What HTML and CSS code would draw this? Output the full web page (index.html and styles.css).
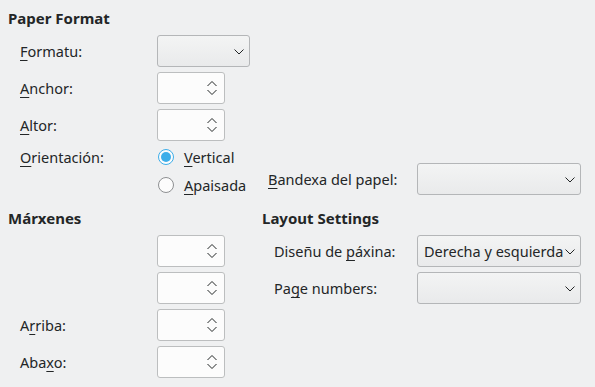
FILE: index.html
```html
<!DOCTYPE html>
<html>
<head>
<meta charset="utf-8">
<link rel="stylesheet" href="styles.css">
</head>
<body>
<div class="page">
  <section class="paper">
    <h2 class="heading">Paper Format</h2>
    <div class="paper-grid">
      <label class="label"><u>F</u>ormatu:</label>
      <div class="combo combo-small"><span class="combo-text"></span><svg class="chev" viewBox="0 0 10 6" width="10" height="6"><path d="M0.5 0.5 L5 5 L9.5 0.5" fill="none" stroke="#232627" stroke-width="1"/></svg></div>
      <div></div>

      <label class="label"><u>A</u>nchor:</label>
      <div class="spin"><svg class="spin-arrows" viewBox="0 0 10 14" width="10" height="14"><path d="M0.5 5 L5 0.5 L9.5 5 M0.5 9 L5 13.5 L9.5 9" fill="none" stroke="#232627" stroke-width="1"/></svg></div>
      <div></div>

      <label class="label"><u>A</u>ltor:</label>
      <div class="spin"><svg class="spin-arrows" viewBox="0 0 10 14" width="10" height="14"><path d="M0.5 5 L5 0.5 L9.5 5 M0.5 9 L5 13.5 L9.5 9" fill="none" stroke="#232627" stroke-width="1"/></svg></div>
      <div></div>

      <label class="label label-top"><u>O</u>rientación:</label>
      <div class="radios">
        <div class="radio-row"><span class="radio checked"></span><span><u>V</u>ertical</span></div>
        <div class="radio-row"><span class="radio"></span><span><u>A</u>paisada</span></div>
      </div>
      <div class="tray">
        <label class="label tray-label"><u>B</u>andexa del papel:</label>
        <div class="combo combo-wide"><span class="combo-text"></span><svg class="chev" viewBox="0 0 10 6" width="10" height="6"><path d="M0.5 0.5 L5 5 L9.5 0.5" fill="none" stroke="#232627" stroke-width="1"/></svg></div>
      </div>
    </div>
  </section>

  <div class="bottom">
    <section class="margins">
      <h2 class="heading">Márxenes</h2>
      <div class="form-grid margins-grid">
        <label class="label"></label>
        <div class="spin"><svg class="spin-arrows" viewBox="0 0 10 14" width="10" height="14"><path d="M0.5 5 L5 0.5 L9.5 5 M0.5 9 L5 13.5 L9.5 9" fill="none" stroke="#232627" stroke-width="1"/></svg></div>
        <label class="label"></label>
        <div class="spin"><svg class="spin-arrows" viewBox="0 0 10 14" width="10" height="14"><path d="M0.5 5 L5 0.5 L9.5 5 M0.5 9 L5 13.5 L9.5 9" fill="none" stroke="#232627" stroke-width="1"/></svg></div>
        <label class="label">A<u>r</u>riba:</label>
        <div class="spin"><svg class="spin-arrows" viewBox="0 0 10 14" width="10" height="14"><path d="M0.5 5 L5 0.5 L9.5 5 M0.5 9 L5 13.5 L9.5 9" fill="none" stroke="#232627" stroke-width="1"/></svg></div>
        <label class="label">Aba<u>x</u>o:</label>
        <div class="spin"><svg class="spin-arrows" viewBox="0 0 10 14" width="10" height="14"><path d="M0.5 5 L5 0.5 L9.5 5 M0.5 9 L5 13.5 L9.5 9" fill="none" stroke="#232627" stroke-width="1"/></svg></div>
      </div>
    </section>
    <section class="layout">
      <h2 class="heading">Layout Settings</h2>
      <div class="form-grid layout-grid">
        <label class="label">Diseñu de <u>p</u>áxina:</label>
        <div class="combo combo-wide"><span class="combo-text">Derecha y esquierda</span><svg class="chev" viewBox="0 0 10 6" width="10" height="6"><path d="M0.5 0.5 L5 5 L9.5 0.5" fill="none" stroke="#232627" stroke-width="1"/></svg></div>
        <label class="label">Pa<u>g</u>e numbers:</label>
        <div class="combo combo-wide"><span class="combo-text"></span><svg class="chev" viewBox="0 0 10 6" width="10" height="6"><path d="M0.5 0.5 L5 5 L9.5 0.5" fill="none" stroke="#232627" stroke-width="1"/></svg></div>
      </div>
    </section>
  </div>
</div>
</body>
</html>
```

FILE: styles.css
```css
* { box-sizing: border-box; }
html, body {
  margin: 0;
  padding: 0;
  background: #eff0f1;
  color: #232627;
  font-family: "Noto Sans", "DejaVu Sans", sans-serif;
  font-size: 14.5px;
  width: 595px;
  height: 387px;
  overflow: hidden;
}
.page {
  padding: 8px 0 0 8px;
}
.heading {
  margin: 0;
  font-size: 15px;
  font-weight: bold;
  line-height: 20px;
  height: 20px;
}
u {
  text-decoration: underline;
  text-underline-offset: 3px;
  text-decoration-thickness: 1px;
}
.paper-grid {
  margin-top: 7px;
  display: grid;
  grid-template-columns: 149px 105px 1fr;
  row-gap: 5px;
  align-items: center;
}
.label {
  padding-left: 12px;
  white-space: nowrap;
  line-height: 20px;
}
.label-top {
  align-self: start;
  padding-top: 1px;
}
.combo {
  position: relative;
  height: 32px;
  border: 1px solid #b4b6b8;
  border-radius: 3px;
  background: linear-gradient(#f3f4f4, #e9eaeb);
  display: flex;
  align-items: center;
  overflow: hidden;
}
.combo-small { width: 93px; }
.combo-wide { width: 164px; }
.combo-text {
  padding-left: 6px;
  white-space: nowrap;
  overflow: hidden;
  flex: 1;
  line-height: 20px;
  margin-right: 15px;
}
.chev {
  position: absolute;
  right: 5px;
  top: 13px;
}
.spin {
  position: relative;
  width: 68px;
  height: 32px;
  border: 1px solid #bcbebf;
  border-radius: 3px;
  background: #fcfcfc;
}
.spin-arrows {
  position: absolute;
  right: 7px;
  top: 8px;
}
.radios {
  display: flex;
  flex-direction: column;
  gap: 6px;
}
.radio-row {
  display: flex;
  align-items: center;
  gap: 10px;
  height: 22px;
  margin-left: 1px;
  white-space: nowrap;
}
.radio {
  width: 16px;
  height: 16px;
  border-radius: 50%;
  border: 1px solid #8e9092;
  background: #fcfcfc;
  position: relative;
  flex: none;
}
.radio.checked {
  border-color: #3daee9;
}
.radio.checked::after {
  content: "";
  position: absolute;
  left: 2px;
  top: 2px;
  width: 10px;
  height: 10px;
  border-radius: 50%;
  background: #3daee9;
}
.tray {
  align-self: end;
  display: flex;
  align-items: center;
  margin-bottom: 1px;
}
.tray-label {
  padding-left: 6px;
  width: 155px;
}
.bottom {
  margin-top: 12px;
  display: flex;
}
.margins { width: 254px; }
.layout { flex: 1; }
.form-grid {
  margin-top: 7px;
  display: grid;
  row-gap: 5px;
  align-items: center;
}
.margins-grid {
  grid-template-columns: 149px 68px;
}
.layout-grid {
  grid-template-columns: 155px 164px;
}
```
